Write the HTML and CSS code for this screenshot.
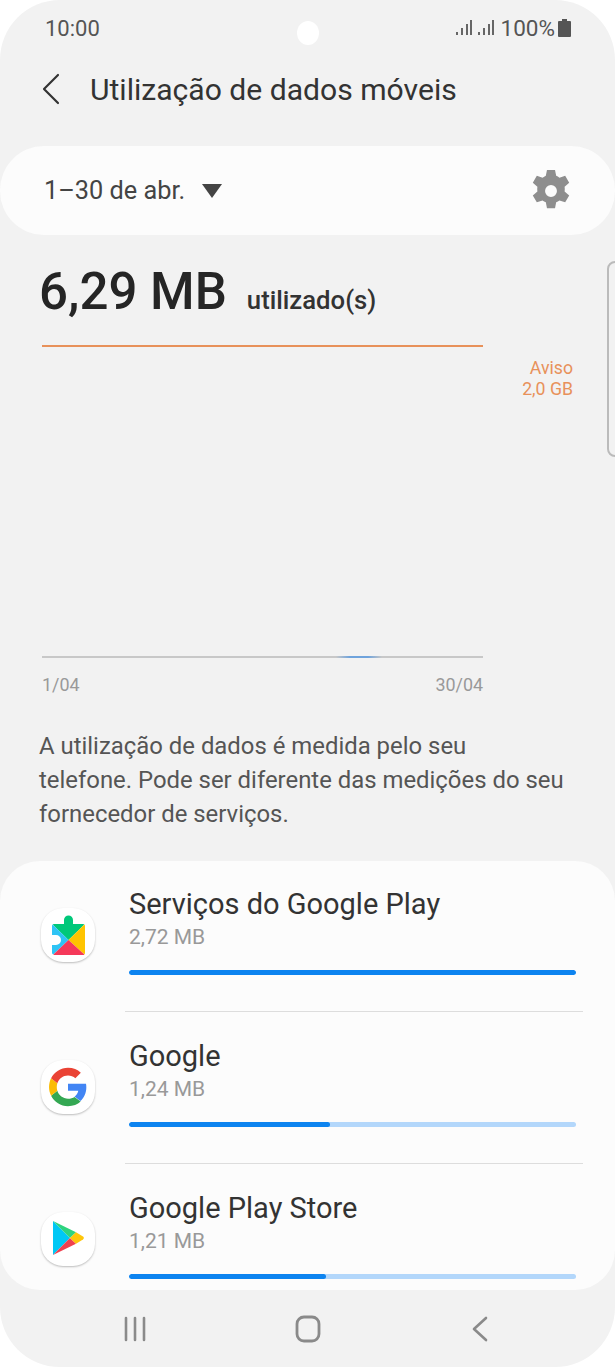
FILE: index.html
```html
<!DOCTYPE html>
<html lang="pt">

<head>
    <meta charset="UTF-8">
    <meta name="viewport" content="width=device-width, initial-scale=1.0">
    <title>Utilização de dados móveis</title>
    <link rel="stylesheet" href="styles.css">
</head>

<body>
    <div class="phone">
        <div class="status">
            <span>10:00</span>
            <div class="status-right">
                <svg width="40" height="18" viewBox="0 0 40 18" fill="#666">
                    <rect x="0" y="13" width="2" height="3"/><rect x="5" y="9" width="2" height="7"/><rect x="10" y="5" width="2" height="11"/><rect x="14" y="1" width="2" height="15"/>
                    <rect x="22" y="13" width="2" height="3"/><rect x="27" y="9" width="2" height="7"/><rect x="32" y="5" width="2" height="11"/><rect x="36" y="1" width="2" height="15"/>
                </svg>
                <span>100%</span>
                <svg width="13" height="18" viewBox="0 0 13 18" fill="#555">
                    <path d="M4 0h5v2h3a1 1 0 0 1 1 1v14a1 1 0 0 1-1 1H1a1 1 0 0 1-1-1V3a1 1 0 0 1 1-1h3z"/>
                </svg>
            </div>
        </div>
        <div class="camera"></div>

        <div class="header">
            <svg width="18" height="32" viewBox="0 0 18 32" fill="none" stroke="#333" stroke-width="2.2" stroke-linecap="round" stroke-linejoin="round">
                <path d="M16 2 2 16l14 14"/>
            </svg>
            <h1>Utilização de dados móveis</h1>
        </div>

        <div class="period">
            <div class="period-left">
                <span>1–30 de abr.</span>
                <div class="arrow"></div>
            </div>
            <svg width="46" height="46" viewBox="0 0 24 24" fill="#8e8e8e">
                <path fill-rule="evenodd" d="M9.900 1h4.200l.6 3.100c.6.2 1.200.6 1.700 1l3-1 2.100 3.600-2.400 2.100a7.600 7.600 0 0 1 0 2.400l2.400 2.100-2.100 3.600-3-1c-.5.4-1.100.7-1.700 1l-.6 3.100H9.900l-.6-3.100c-.6-.2-1.200-.6-1.700-1l-3 1-2.100-3.600 2.400-2.100a7.600 7.600 0 0 1 0-2.400L2.500 7.700l2.100-3.600 3 1c.5-.4 1.100-.7 1.700-1zM12 8.900a3.100 3.100 0 1 0 0 6.200 3.100 3.100 0 0 0 0-6.200z"/>
            </svg>
        </div>

        <div class="used">
            <span class="used-value">6,29 MB</span>
            <span class="used-label">utilizado(s)</span>
        </div>

        <div class="chart">
            <div class="chart-main">
                <div class="limit-line"></div>
                <div class="base-line"><div class="base-used"></div></div>
                <div class="dates">
                    <span>1/04</span>
                    <span>30/04</span>
                </div>
            </div>
            <div class="warning">
                <span>Aviso</span>
                <span>2,0 GB</span>
            </div>
        </div>
        <div class="side-handle"></div>

        <p class="note">A utilização de dados é medida pelo seu<br>telefone. Pode ser diferente das medições do seu<br>fornecedor de serviços.</p>

        <div class="apps">
            <div class="app">
                <div class="app-icon">
                    <svg width="33" height="40" viewBox="0 0 33 40">
                        <path fill="#00c87a" d="M2 9h10V5a4.500 4.500 0 0 1 9 0v4h10a2 2 0 0 1 1.400.6L16.500 25 .6 9.600A2 2 0 0 1 2 9z"/>
                        <path fill="#2ec4f5" d="M.6 9.600 16.500 25 1.400 39.500A2 2 0 0 1 0 38v-8h4a5 5 0 0 0 0-10H0v-9a2 2 0 0 1 .6-1.400z"/>
                        <path fill="#ffc400" d="M32.400 9.600A2 2 0 0 1 33 11v27a2 2 0 0 1-.6 1.400L16.500 25z"/>
                        <path fill="#f5395a" d="M16.500 25l15.900 14.400A2 2 0 0 1 31 40H2a2 2 0 0 1-.6-.5z"/>
                    </svg>
                </div>
                <div class="app-info">
                    <div class="app-name">Serviços do Google Play</div>
                    <div class="app-size">2,72 MB</div>
                    <div class="bar"><div class="bar-fill" style="width: 100%"></div></div>
                </div>
            </div>
            <div class="app">
                <div class="app-icon">
                    <svg width="40" height="40" viewBox="0 0 48 48">
                        <path fill="#4285f4" d="M46 24.500c0-1.600-.1-3.100-.4-4.500H24v8.500h12.300c-.5 2.900-2.100 5.300-4.500 6.900l7 5.500C43 37 46 31.300 46 24.500z"/>
                        <path fill="#34a853" d="M24 47c6.200 0 11.400-2 15.200-5.600l-7.400-5.500c-2 1.400-4.700 2.200-7.800 2.200-6 0-11-4-12.800-9.500l-7.500 5.800C7.500 41.900 15.200 47 24 47z"/>
                        <path fill="#fbbc05" d="M11.200 28.600c-.9-2.900-.9-6.300 0-9.200l-7.500-5.800c-3.200 6.300-3.200 14.500 0 20.800z"/>
                        <path fill="#ea4335" d="M24 10.100c3.400 0 6.400 1.200 8.800 3.400l6.600-6.600C35.400 3.200 30.200 1 24 1 15.200 1 7.500 6.100 3.700 13.600l7.500 5.800c1.800-5.400 6.800-9.300 12.800-9.300z"/>
                    </svg>
                </div>
                <div class="app-info">
                    <div class="app-name">Google</div>
                    <div class="app-size">1,24 MB</div>
                    <div class="bar"><div class="bar-fill" style="width: 45%"></div></div>
                </div>
            </div>
            <div class="app">
                <div class="app-icon">
                    <svg class="play-icon" width="32" height="36" viewBox="0 0 32 38" preserveAspectRatio="none">
                        <path fill="#00c8f5" d="M1 1v36l17-18z"/>
                        <path fill="#2ed47e" d="M1 1l17 18 6-6z"/>
                        <path fill="#f0404f" d="M1 37l17-18 6 6z"/>
                        <path fill="#ffc60a" d="M24 13l7 4.500a1.800 1.800 0 0 1 0 3L24 25l-6-6z"/>
                    </svg>
                </div>
                <div class="app-info">
                    <div class="app-name">Google Play Store</div>
                    <div class="app-size">1,21 MB</div>
                    <div class="bar"><div class="bar-fill" style="width: 44%"></div></div>
                </div>
            </div>
        </div>

        <div class="nav">
            <svg width="26" height="26" viewBox="0 0 26 26" fill="none" stroke="#8a8a8a" stroke-width="2.6" stroke-linecap="round">
                <path d="M3 2v22M12 2v22M21 2v22"/>
            </svg>
            <svg class="nav-home" width="26" height="28" viewBox="0 0 26 28" fill="none" stroke="#8a8a8a" stroke-width="2.8">
                <rect x="2" y="2" width="22" height="24" rx="7"/>
            </svg>
            <svg width="16" height="26" viewBox="0 0 16 26" fill="none" stroke="#8a8a8a" stroke-width="2.6" stroke-linecap="round" stroke-linejoin="round">
                <path d="M14 2 2 13l12 11"/>
            </svg>
        </div>
    </div>
</body>

</html>
```

FILE: styles.css
```css
body {
    font-family: Roboto, "Liberation Sans", sans-serif;
    background-color: #fff;
    margin: 0;
    padding: 0;
}

.phone {
    position: relative;
    width: 615px;
    height: 1367px;
    background-color: #f2f2f2;
    border-radius: 60px;
    overflow: hidden;
}

.status {
    display: flex;
    justify-content: space-between;
    align-items: center;
    height: 28px;
    padding: 14px 44px 0 45px;
    font-size: 22px;
    color: #555;
}

.status-right {
    display: flex;
    align-items: center;
    gap: 3px;
}

.status-right span {
    margin-left: 2px;
    font-size: 22.5px;
}

.camera {
    position: absolute;
    left: 297px;
    top: 21px;
    width: 22px;
    height: 24px;
    background-color: #fff;
    border-radius: 50%;
}

.header {
    display: flex;
    align-items: center;
    gap: 30px;
    height: 40px;
    margin-top: 27px;
    padding-left: 42px;
}

.header h1 {
    margin: 0;
    font-size: 30.1px;
    font-weight: 400;
    color: #333;
}

.period {
    display: flex;
    justify-content: space-between;
    align-items: center;
    height: 89px;
    margin-top: 37px;
    padding: 0 41px 0 44px;
    background-color: #fcfcfc;
    border-radius: 44px;
}

.period-left {
    display: flex;
    align-items: center;
    gap: 17px;
    font-size: 25.3px;
    color: #444;
}

.arrow {
    width: 0;
    height: 0;
    border-left: 10px solid transparent;
    border-right: 10px solid transparent;
    border-top: 14px solid #444;
}

.used {
    display: flex;
    align-items: baseline;
    gap: 20px;
    margin-top: 27px;
    padding-left: 39px;
    color: #252525;
}

.used-value {
    font-size: 51px;
    font-weight: 500;
}

.used-label {
    font-size: 25.7px;
    font-weight: 500;
    color: #333;
}

.chart {
    display: flex;
    height: 359px;
    margin-top: 24px;
    padding-left: 42px;
}

.chart-main {
    display: flex;
    flex-direction: column;
    width: 441px;
}

.limit-line {
    height: 2px;
    background-color: #e8915a;
}

.base-line {
    position: relative;
    height: 2px;
    margin-top: 309px;
    background-color: #c8c8c8;
}

.base-used {
    position: absolute;
    left: 294px;
    width: 46px;
    height: 2px;
    background: linear-gradient(to right, #c8c8c8, #6fa3dc 30%, #6fa3dc 70%, #c8c8c8);
}

.dates {
    display: flex;
    justify-content: space-between;
    margin-top: 16px;
    font-size: 17.9px;
    color: #999;
}

.warning {
    display: flex;
    flex-direction: column;
    align-items: flex-end;
    width: 50px;
    margin-left: 40px;
    margin-top: 13px;
    white-space: nowrap;
    font-size: 17.7px;
    line-height: 21px;
    color: #e8915a;
}

.side-handle {
    position: absolute;
    left: 607px;
    top: 261px;
    width: 12px;
    height: 192px;
    border: 2px solid #bbb;
    border-radius: 8px;
}

.note {
    margin: 25px 0 0 39px;
    font-size: 23.9px;
    line-height: 34px;
    color: #555;
}

.apps {
    height: 429px;
    margin-top: 30px;
    background-color: #fcfcfc;
    border-radius: 40px;
    overflow: hidden;
}

.app {
    display: flex;
    height: 152px;
}

.app-icon {
    display: flex;
    align-items: center;
    justify-content: center;
    flex-shrink: 0;
    width: 54px;
    height: 54px;
    margin: 47px 30px 0 41px;
    background-color: #fff;
    border-radius: 22px;
    box-shadow: 0 1px 2px rgba(0, 0, 0, 0.25);
}

.play-icon {
    margin-bottom: 2px;
}

.app-info {
    flex: 1;
    margin-right: 32px;
    margin-top: -2px;
    padding: 27px 7px 0 4px;
    border-top: 1px solid #ddd;
}

.app:first-child .app-info {
    border-top-color: transparent;
}

.app-name {
    font-size: 29px;
    line-height: 34px;
    color: #333;
}

.app-size {
    margin-top: 4px;
    font-size: 21px;
    line-height: 24px;
    color: #999;
}

.bar {
    height: 5px;
    margin-top: 21px;
    background-color: #b3d7fb;
    border-radius: 3px;
    overflow: hidden;
}

.bar-fill {
    height: 100%;
    background-color: #0d84f0;
    border-radius: 3px;
}

.nav {
    display: flex;
    justify-content: space-between;
    align-items: center;
    height: 77px;
    padding: 0 127px 0 123px;
}

.nav-home {
    margin-right: 6px;
}
```
